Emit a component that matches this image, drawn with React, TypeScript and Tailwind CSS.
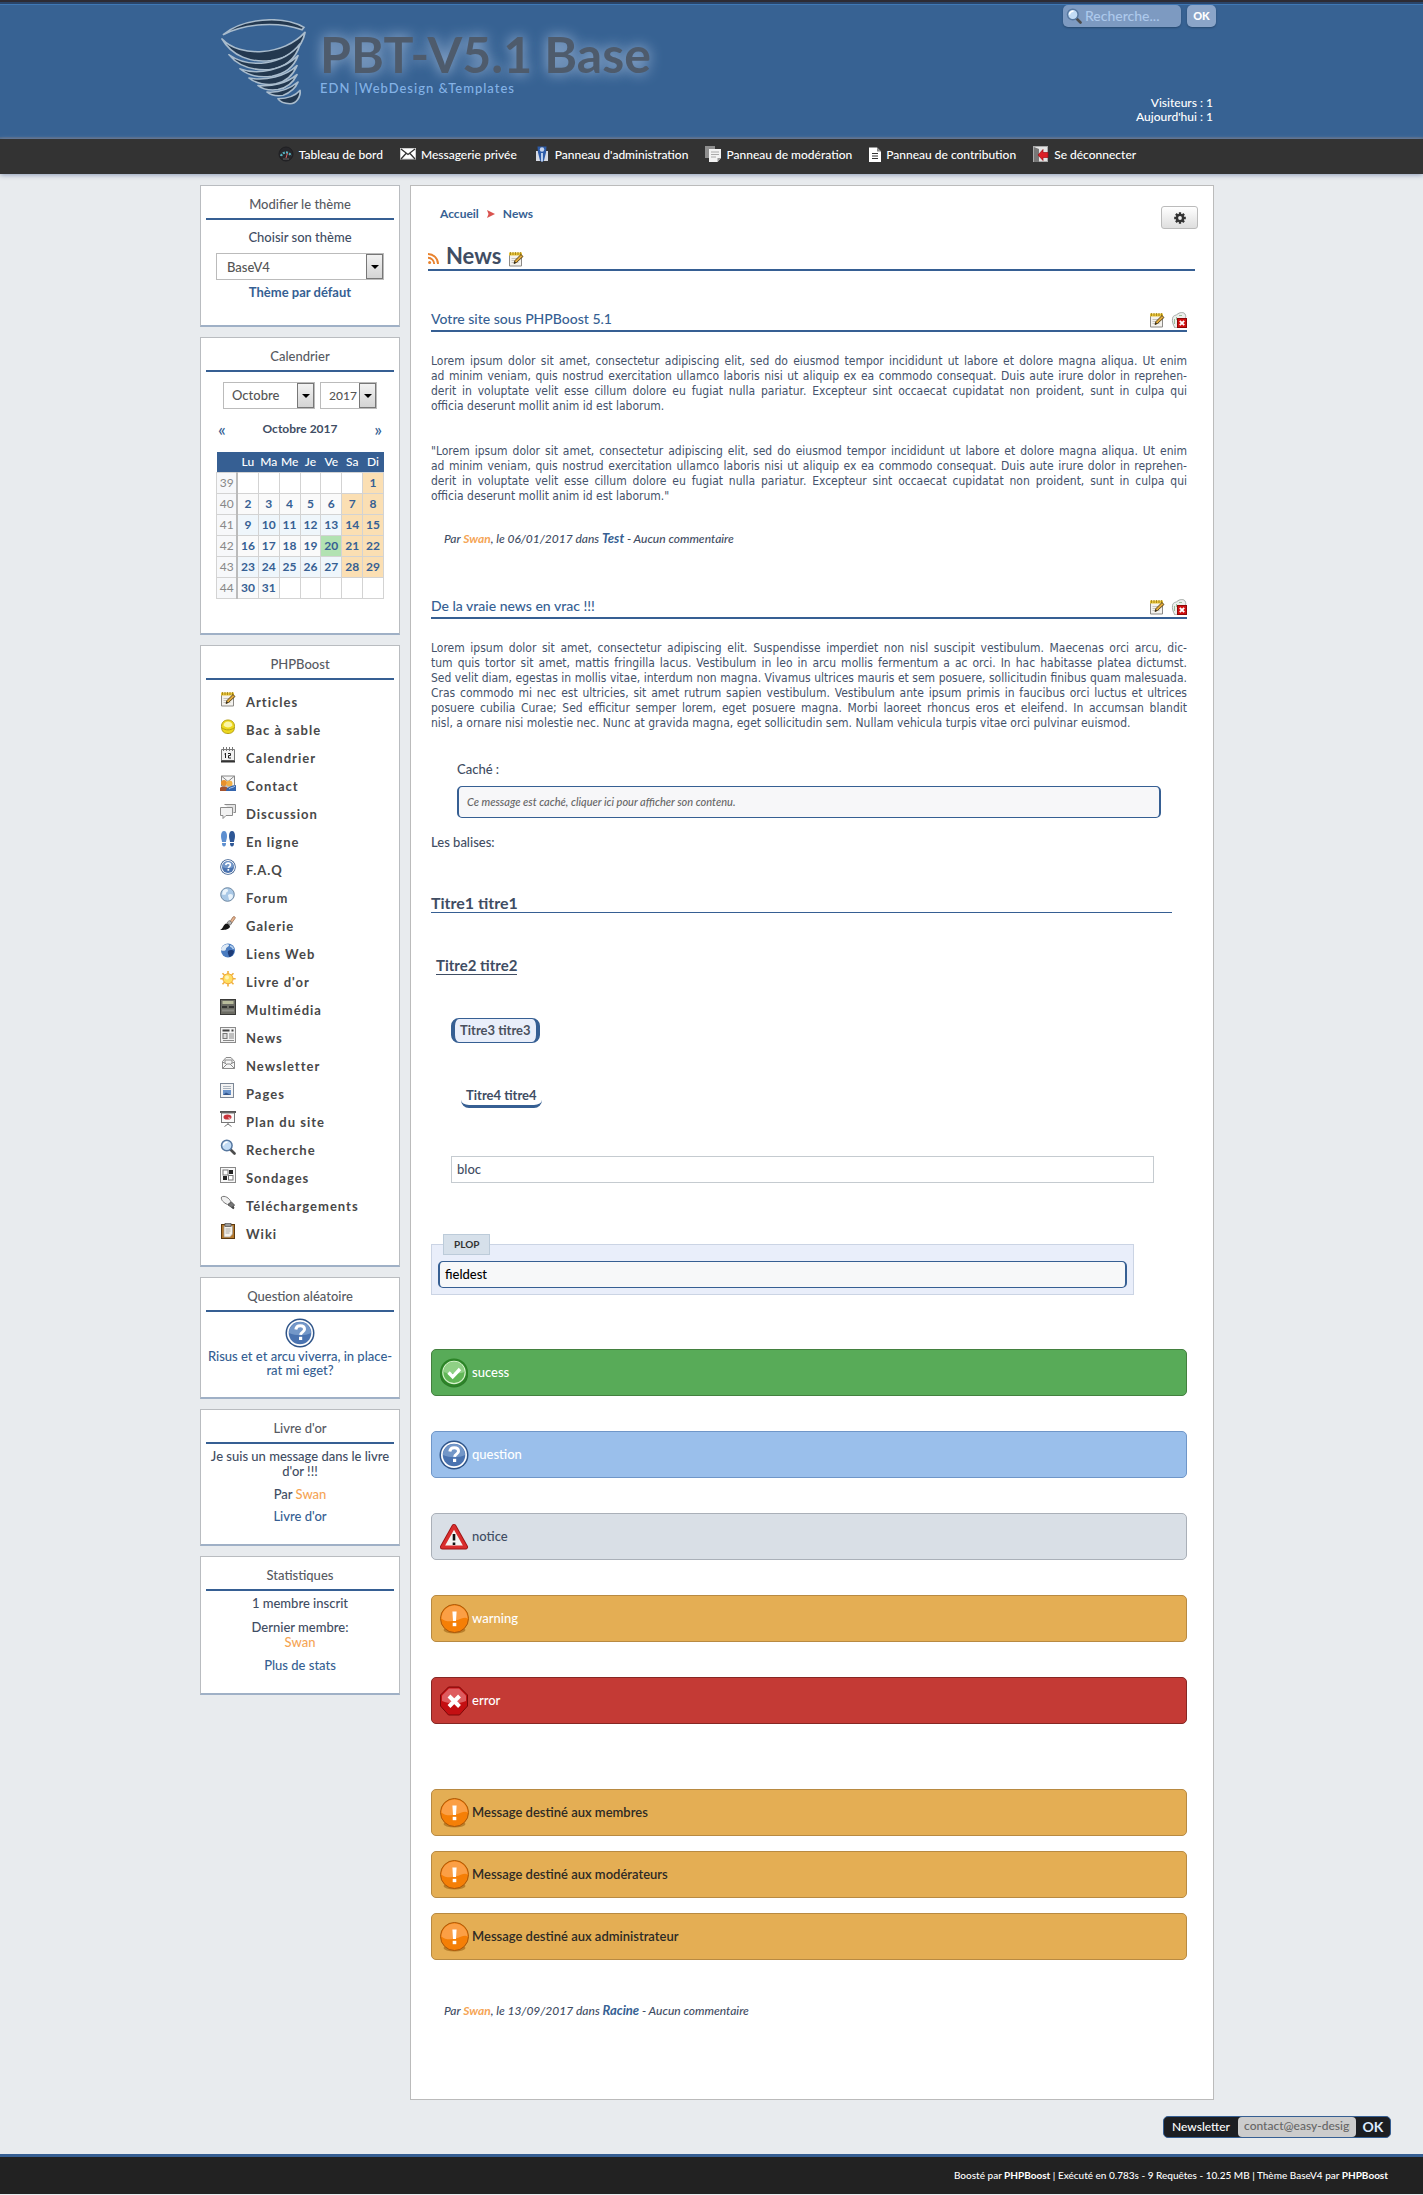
import React from 'react';

type IconProps = { className?: string };

function Svg({ children, className = 'h-4 w-4', box = 16 }: { children: React.ReactNode; className?: string; box?: number }) {
  return (
    <svg viewBox={`0 0 ${box} ${box}`} className={className} fill="none" aria-hidden="true">
      {children}
    </svg>
  );
}

function NotepadIcon({ className }: IconProps) {
  return (
    <Svg className={className}>
      <path d="M1.500 3h12v12h-12z" fill="#f4f2ee" stroke="#8c8a86" />
      <path d="M3.500 7.500h7M3.500 9.500h5M3.500 11.500h7" stroke="#c9c5bd" />
      <path d="M1 1.500h13v3H1z" fill="#e8c437" />
      <path d="M2.500 1v3M5 1v3M7.500 1v3M10 1v3M12.500 1v3" stroke="#9c7c12" strokeWidth="0.800" />
      <path d="M6 12.500l1-3L13 3.500l2 2-6.500 6z" fill="#e2a93b" stroke="#4b3a12" strokeWidth="0.900" />
      <path d="M6 12.500l.7-2 1.400 1.300z" fill="#222" />
    </Svg>
  );
}

function TrashIcon() {
  return (
    <Svg>
      <path d="M1.500 6.500C2 3 5 3.500 6 2.500c2.500-2.500 7-2.500 8-.5 1 2 1 3 0 5l-2 8-8 1C2 13 1 9 1.500 6.500z" fill="#eceeec" stroke="#9aa09c" strokeWidth="0.900" />
      <path d="M3.500 7v5M5.500 5v3M8 3.500h3" stroke="#8eb890" strokeWidth="0.900" />
      <rect x="6.500" y="6.500" width="9" height="9" fill="#d01010" stroke="#8d0606" />
      <path d="M8.800 8.800l4.400 4.400M13.200 8.800l-4.400 4.400" stroke="#fff" strokeWidth="1.900" />
    </Svg>
  );
}

function QuestionIcon({ className }: IconProps) {
  return (
    <Svg box={30} className={className}>
      <circle cx="15" cy="15" r="14.500" fill="#2f5488" />
      <circle cx="15" cy="15" r="13" fill="#fff" />
      <circle cx="15" cy="15" r="11.300" fill="#4a73b0" />
      <path d="M4 15a11 11 0 0 1 22 0c-6 3-15 3-22 0z" fill="#7397c8" />
      <path d="M10.800 11.500c.3-2.600 2-3.800 4.400-3.800 2.600 0 4.300 1.300 4.300 3.500 0 3-3.600 2.800-3.900 5.600" stroke="#fff" strokeWidth="3" />
      <rect x="14" y="18.800" width="3.200" height="3.200" fill="#fff" />
    </Svg>
  );
}

function SuccessIcon() {
  return (
    <Svg box={30} className="h-[30px] w-[30px]">
      <ellipse cx="15" cy="17" rx="14" ry="12.500" fill="#2d7a2a" />
      <circle cx="15" cy="14.500" r="14" fill="#2c8427" />
      <circle cx="15" cy="14.500" r="11.800" fill="#d5f2cb" />
      <circle cx="15" cy="14.500" r="10.600" fill="#62b757" />
      <path d="M4.500 14a10.500 10.500 0 0 1 21 0c-6 2-15 2-21 0z" fill="#8fd085" />
      <path d="M9.500 14.500l4.200 4.300 7.300-7.800" stroke="#fff" strokeWidth="3.400" />
    </Svg>
  );
}

function NoticeIcon() {
  return (
    <Svg box={30} className="h-[30px] w-[30px]">
      <path d="M15 4.500L26.500 25h-23z" fill="#f4f4f2" stroke="#9e1414" strokeWidth="5" strokeLinejoin="round" />
      <path d="M15 4.500L26.500 25h-23z" fill="#f4f4f2" stroke="#d92e2e" strokeWidth="3.200" strokeLinejoin="round" />
      <path d="M15 12v6.500M15 20.500v2.500" stroke="#111" strokeWidth="2.600" />
    </Svg>
  );
}

function WarningIcon() {
  return (
    <Svg box={30} className="h-[30px] w-[30px]">
      <ellipse cx="15.500" cy="26" rx="11" ry="3.500" fill="#b87f2c" />
      <circle cx="15.500" cy="14.500" r="14" fill="#f57f06" stroke="#a8560a" />
      <path d="M2.500 14.500a13 13 0 0 1 26 0c-3-2-7 1-12 2-5 1.500-11 1-14-2z" fill="#fb9f45" />
      <path d="M13.400 7.500h4.200l-.6 9.500h-3z" fill="#fff" />
      <rect x="13.700" y="18.800" width="3.600" height="3.400" fill="#fff" />
    </Svg>
  );
}

function ErrorIcon() {
  return (
    <Svg box={30} className="h-[30px] w-[30px]">
      <path d="M9.500 1h11l8 8v11l-8 9h-11l-8-9V9z" fill="#c40f12" stroke="#7c0808" />
      <path d="M10 2.500h10l7 7V15c-7 3-17 3-24 0V9.500z" fill="#de5c5f" />
      <path d="M10 10l10.500 10.500M20.500 10L10 20.500" stroke="#fff" strokeWidth="4" />
    </Svg>
  );
}

function MagnifierIcon({ className }: IconProps) {
  return (
    <Svg className={className}>
      <path d="M10.500 10.500l4 4" stroke="#4c4c4c" strokeWidth="2.600" strokeLinecap="round" />
      <circle cx="6.800" cy="6.500" r="5.300" fill="#c3dcf5" stroke="#56779f" strokeWidth="1.500" />
      <path d="M3.500 6.500a3.500 3.500 0 0 1 4-3.300" stroke="#fff" strokeWidth="1.500" />
    </Svg>
  );
}

const menu: { label: string; icon: React.ReactNode }[] = [
  { label: 'Articles', icon: <NotepadIcon /> },
  {
    label: 'Bac à sable',
    icon: (
      <Svg>
        <path d="M1.500 7.500C1.500 3.500 4 1 8 1s6.500 2.500 6.500 6.500c0 5-2.500 7-6.500 7s-6.500-2-6.500-7z" fill="#edd81f" stroke="#b5a016" />
        <path d="M3.500 6.500C4 3.500 6 2.500 8 2.500s4 1 4.500 4C10 9 6 9 3.500 6.500z" fill="#fbf6a8" />
        <path d="M2 9c4 2.500 8 2.500 12 0" stroke="#b5a016" />
      </Svg>
    ),
  },
  {
    label: 'Calendrier',
    icon: (
      <Svg>
        <path d="M1.500 2.500h13v11h-13z" fill="#f2f2f2" stroke="#777" />
        <path d="M1 14.500h14" stroke="#333" strokeWidth="2" />
        <path d="M3.500 0v4M6.500 0v4M9.500 0v4M12.500 0v4" stroke="#777" />
        <path d="M5.500 6v5M4.500 7h1M8 6.500h2.500v2H8.500V11H11" stroke="#222" />
      </Svg>
    ),
  },
  {
    label: 'Contact',
    icon: (
      <Svg>
        <path d="M1.500 1h13v10h-13z" fill="#f6f6f6" stroke="#888" />
        <path d="M1.500 1L8 6.500 14.500 1" stroke="#888" />
        <circle cx="4" cy="8" r="3" fill="#e8902c" />
        <circle cx="9.500" cy="8.500" r="3" fill="#f2b046" />
        <path d="M0 16v-3c1-2 6-2 8 0v3z" fill="#a5532f" />
        <path d="M6 16c0-4 5-5 10-6v6z" fill="#3565ad" />
        <path d="M9 14c2-2 4-1 6-3" stroke="#a9c6ec" />
      </Svg>
    ),
  },
  {
    label: 'Discussion',
    icon: (
      <Svg>
        <path d="M4.500 1.500h11v8h-2" fill="#e4e4e4" stroke="#8b8b8b" />
        <path d="M.5 4.500h12v8H6L3 15.500v-3H.5z" fill="#f2f2f2" stroke="#8b8b8b" />
      </Svg>
    ),
  },
  {
    label: 'En ligne',
    icon: (
      <Svg>
        <path d="M1 5c0-3 1-5 3-5s3 2 3 5-1 4-1 6H2c0-2-1-3-1-6z" fill="#5d8fd0" />
        <path d="M2 12h4c0 2-.5 3.500-2 3.500S2 14 2 12z" fill="#5d8fd0" />
        <path d="M15 5c0-3-1-5-3-5S9 2 9 5s1 4 1 6h4c0-2 1-3 1-6z" fill="#2e5796" />
        <path d="M14 12h-4c0 2 .5 3.500 2 3.500s2-1.500 2-3.500z" fill="#2e5796" />
      </Svg>
    ),
  },
  { label: 'F.A.Q', icon: <QuestionIcon className="h-4 w-4" /> },
  {
    label: 'Forum',
    icon: (
      <Svg>
        <circle cx="7.500" cy="7.500" r="6.800" fill="#a9c8e6" stroke="#6f89a3" />
        <path d="M3 3.500c2-2 5-2 5 0s-2 1-2 3-2 1-4 1zM8 8c2-2 5-1 5 1s-2 4-4 4c0-2-1-3-1-5z" fill="#e9f3fb" />
      </Svg>
    ),
  },
  {
    label: 'Galerie',
    icon: (
      <Svg>
        <path d="M9 8l4-6c1-1 3 0 2 1.500L11 9z" fill="#e8b490" stroke="#8a6040" strokeWidth="0.700" />
        <path d="M7 8l2-2.500 3 2-1.500 2.500z" fill="#b9b9b9" stroke="#666" strokeWidth="0.700" />
        <path d="M0 15c3-1 3-5 6-6.500 2 0 4 1.500 4 3.500-2 3-6 3-10 3z" fill="#161616" />
      </Svg>
    ),
  },
  {
    label: 'Liens Web',
    icon: (
      <Svg>
        <circle cx="8" cy="7.500" r="7" fill="#4a7cc0" />
        <path d="M3 3c2-2 6-2 6-1 0 2-3 2-3 4S3 8 1.500 7.500 2 4 3 3z" fill="#dfeaf5" />
        <path d="M8 8c2-1.500 5-1 6 0 0 3-3 6-5 6 0-2-2-4-1-6z" fill="#1d3c78" />
        <path d="M10 3c2 0 3 2 3.500 3" stroke="#b7d0ec" strokeWidth="1.500" />
      </Svg>
    ),
  },
  {
    label: "Livre d'or",
    icon: (
      <Svg>
        <path d="M8 0v15.500M.3 7.800h15.400M2.500 2.300l11 11M13.500 2.300l-11 11" stroke="#efb03c" strokeWidth="1.600" />
        <circle cx="8" cy="7.800" r="5" fill="#ffdf62" stroke="#f2a73a" />
        <circle cx="7" cy="6.500" r="2" fill="#fff5b8" />
      </Svg>
    ),
  },
  {
    label: 'Multimédia',
    icon: (
      <Svg>
        <rect x="0.500" y="0.500" width="15" height="15" fill="#6c6c64" stroke="#3a3a38" />
        <path d="M2.500 3.500h11" stroke="#b9bc9c" strokeWidth="3" />
        <path d="M2 8h5M9 8h5" stroke="#222" strokeWidth="1.500" />
        <path d="M2 11.500h12" stroke="#8d8d86" strokeWidth="2" />
      </Svg>
    ),
  },
  {
    label: 'News',
    icon: (
      <Svg>
        <rect x="0.500" y="0.500" width="15" height="15" fill="#f3f3f3" stroke="#8a8a8a" />
        <path d="M2.500 3.500h7M11.500 3.500h2" stroke="#444" strokeWidth="2" />
        <rect x="3" y="6.500" width="4" height="5" fill="#ddd" stroke="#777" />
        <path d="M9 7h5M9 9h5M9 11h5M3 13.500h11" stroke="#8a8a8a" />
      </Svg>
    ),
  },
  {
    label: 'Newsletter',
    icon: (
      <Svg>
        <path d="M2.500 13.500v-7L6 2.500h5l3.500 4v7z" fill="#f6f6f6" stroke="#8a8a8a" />
        <path d="M5 8V5h7v3M2.500 13.500L7 9h3l4.500 4.500M2.500 7l4 2M14.500 7l-4 2" stroke="#8a8a8a" />
      </Svg>
    ),
  },
  {
    label: 'Pages',
    icon: (
      <Svg>
        <rect x="0.500" y="0.500" width="13" height="14" fill="#f3f3f3" stroke="#7c8796" />
        <path d="M3 3.500h8M3 5.500h8" stroke="#aab3be" />
        <rect x="3" y="7" width="8" height="5" fill="#6a94cc" />
        <path d="M3 12l3-2.500 5 2.500z" fill="#35588f" />
      </Svg>
    ),
  },
  {
    label: 'Plan du site',
    icon: (
      <Svg>
        <path d="M0 1h16" stroke="#555" strokeWidth="2" />
        <rect x="1.500" y="2" width="13" height="9.500" fill="#fafafa" stroke="#777" />
        <ellipse cx="7.500" cy="6" rx="4" ry="2.600" fill="#c8353c" />
        <path d="M8 6l3 1-2 1.500z" fill="#efb0b0" />
        <path d="M8 12v1.500M8 13l-3.500 2.500M8 13l3.500 2.500" stroke="#777" />
      </Svg>
    ),
  },
  { label: 'Recherche', icon: <MagnifierIcon /> },
  {
    label: 'Sondages',
    icon: (
      <Svg>
        <rect x="0.500" y="0.500" width="15" height="15" fill="#f8f8f8" stroke="#888" />
        <rect x="3" y="3" width="5" height="5" fill="#fff" stroke="#777" />
        <rect x="9" y="3" width="4" height="4" fill="#222" />
        <rect x="3" y="9" width="4" height="4" fill="#222" />
        <rect x="8.500" y="8.500" width="4.500" height="4.500" fill="#fff" stroke="#777" />
      </Svg>
    ),
  },
  {
    label: 'Téléchargements',
    icon: (
      <Svg>
        <path d="M1.500 2c3-2 8 1 9.500 5L7.500 9.500C4 8 .5 5 1.500 2z" fill="#f0f0f0" stroke="#777" />
        <path d="M8 10l3.500-3 3 3-2 3z" fill="#777" stroke="#444" strokeWidth="0.800" />
        <path d="M12 12l2 1.500" stroke="#444" strokeWidth="2" />
      </Svg>
    ),
  },
  {
    label: 'Wiki',
    icon: (
      <Svg>
        <rect x="1.500" y="1.500" width="13" height="14" fill="#b77a2c" stroke="#5c3a10" />
        <path d="M4 3h8.500v8l-2.500 3H4z" fill="#f7f3ea" stroke="#999" strokeWidth="0.700" />
        <path d="M5.500 6h5M5.500 8h5M5.500 10h4" stroke="#aaa" />
        <rect x="5" y="0.500" width="6" height="3" fill="#9a9a9a" stroke="#555" strokeWidth="0.700" />
      </Svg>
    ),
  },
];

const navItems: { label: string; icon: React.ReactNode }[] = [
  {
    label: 'Tableau de bord',
    icon: (
      <Svg>
        <circle cx="8" cy="8" r="7" fill="#27272b" stroke="#1f1f22" />
        <path d="M3 10a5.300 5.300 0 0 1 10 0" stroke="#58b3c2" strokeWidth="2.200" strokeDasharray="2 1.200" />
        <path d="M8 12l1.500-5" stroke="#d66" />
        <path d="M5 13h6" stroke="#666" />
      </Svg>
    ),
  },
  {
    label: 'Messagerie privée',
    icon: (
      <Svg>
        <rect x="0.500" y="2.500" width="15" height="10.500" fill="#fff" stroke="#ccc" />
        <path d="M1 3l7 5.500L15 3M1 13l5-5.500M15 13l-5-5.500" stroke="#333" strokeWidth="1.300" />
      </Svg>
    ),
  },
  {
    label: "Panneau d'administration",
    icon: (
      <Svg>
        <path d="M2 5h5v10H2zM9 5h5v10H9z" fill="#d7dbe4" />
        <path d="M3.500 0.500h9l-.5 6-2 8-2 1.500-2-1.500-2-8z" fill="#2c5ba8" />
        <circle cx="8" cy="3.500" r="2.200" fill="#c5d3ec" />
        <path d="M8 7v8.500" stroke="#c9daf2" strokeWidth="1.800" />
      </Svg>
    ),
  },
  {
    label: 'Panneau de modération',
    icon: (
      <Svg>
        <rect x="0" y="0" width="10" height="12" fill="#8f8f8f" />
        <path d="M4 3h12v9l-3.500 4H4z" fill="#f3f3f3" />
        <path d="M6 6h8M6 8.500h8M6 11h5" stroke="#aaa" />
        <path d="M12.500 16v-4H16z" fill="#999" />
      </Svg>
    ),
  },
  {
    label: 'Panneau de contribution',
    icon: (
      <svg viewBox="0 0 12 16" className="h-4 w-3" fill="none" aria-hidden="true">
        <path d="M0 1.500h8l4 4V16H0z" fill="#fff" />
        <path d="M8 1.500v4h4z" fill="#888" />
        <path d="M3 7.500h6M3 10h6M3 12.500h6" stroke="#333" />
      </svg>
    ),
  },
  {
    label: 'Se déconnecter',
    icon: (
      <Svg>
        <rect x="0.500" y="0.500" width="14" height="15" fill="#e4e4e4" stroke="#aaa" />
        <path d="M1 1l5 2v13H1z" fill="#777" />
        <path d="M5 9l5-5.500v3h5v5h-5v3z" fill="#dc1f26" stroke="#9b0d12" strokeWidth="0.700" />
      </Svg>
    ),
  },
];

function TornadoLogo() {
  const bands = [
    'M2 24c18 23 62 20 83-8-3 20-17 31-34 34-20 3-39-5-49-26z',
    'M9 43c20 17 54 13 71-13-4 19-16 29-31 31-17 1-31-4-40-18z',
    'M20 60c18 8 44 1 58-16-4 14-13 22-26 25-12 2-24-1-32-9z',
    'M29 71c16 4 37-2 48-15-4 12-10 19-21 22-9 2-20 0-27-7z',
    'M38 80c14 2 29-3 39-13-4 10-10 16-19 18-7 1-15 0-20-5z',
    'M47 88c12 1 22-3 31-12-3 9-8 13-15 16-6 1-12 0-16-4z',
    'M58 96c9 0 17-3 22-10 1 8-4 16-10 16-5 0-10-2-12-6z',
  ];
  return (
    <svg viewBox="0 0 88 106" className="h-[88px] w-[88px]" preserveAspectRatio="none" aria-hidden="true">
      <path d="M3 19C22-1 62-5 84 10l-2 3C58 3 26 5 3 19z" fill="#23384f" stroke="#a9bccd" strokeWidth="1.800" />
      {bands.map((d) => (
        <path key={d} d={d} fill="#23384f" stroke="#a9bccd" strokeWidth="1.800" strokeLinejoin="round" />
      ))}
    </svg>
  );
}

function Card({ title, children, className }: { title: string; children: React.ReactNode; className: string }) {
  return (
    <section className="border border-b-2 border-[#b9bcc0] border-b-[#9fb0c6] bg-white px-[5px] pt-2">
      <h2 className="border-b-2 border-[#365f93] pt-0.5 pb-[6px] text-center text-[13px] leading-4 font-medium text-[#575a62]">{title}</h2>
      <div className={className}>{children}</div>
    </section>
  );
}

function Select({ label, value, className, textClass }: { label: string; value: string; className: string; textClass: string }) {
  return (
    <span className={`relative inline-block h-[27px] ${className}`}>
      <select aria-label={label} defaultValue={value} className={`h-full w-full appearance-none border border-[#bbb] bg-white text-[#555] ${textClass}`}>
        <option>{value}</option>
      </select>
      <span className="pointer-events-none absolute top-px right-px bottom-px flex w-[17px] items-center justify-center border border-[#777] bg-linear-to-b from-[#f2f2f2] to-[#d4d4d4]">
        <svg viewBox="0 0 8 4" className="h-1 w-2" aria-hidden="true">
          <path d="M0 0h8L4 4z" fill="#000" />
        </svg>
      </span>
    </span>
  );
}

const weeks: [number, (number | null)[]][] = [
  [39, [null, null, null, null, null, null, 1]],
  [40, [2, 3, 4, 5, 6, 7, 8]],
  [41, [9, 10, 11, 12, 13, 14, 15]],
  [42, [16, 17, 18, 19, 20, 21, 22]],
  [43, [23, 24, 25, 26, 27, 28, 29]],
  [44, [30, 31, null, null, null, null, null]],
];

function dayClass(day: number | null, col: number, row: number) {
  if (day === null) return 'bg-white';
  if (day === 20) return 'bg-[#b2e2b2]';
  if (col > 4) return 'bg-[#fbdfb3]';
  return row % 2 === 0 ? 'bg-[#eff6fb]' : 'bg-[#fafafa]';
}

function Calendar() {
  return (
    <table className="mx-auto w-[168px] table-fixed border-collapse text-center text-xs leading-4">
      <thead>
        <tr className="h-5 bg-[#365f93] text-white">
          <th className="font-normal" aria-label="Semaine"></th>
          {['Lu', 'Ma', 'Me', 'Je', 'Ve', 'Sa', 'Di'].map((d) => (
            <th key={d} className="p-0 font-medium">{d}</th>
          ))}
        </tr>
      </thead>
      <tbody>
        {weeks.map(([week, days], row) => (
          <tr key={week} className="h-[21px]">
            <th className="border border-r-2 border-[#d3d3d3] border-r-[#bbb] bg-[#f7f8fa] p-0 font-normal text-[#888]">{week}</th>
            {days.map((day, col) => (
              <td key={col} className={`border border-[#d3d3d3] p-0 font-bold text-[#365f93] ${dayClass(day, col, row)}`}>{day}</td>
            ))}
          </tr>
        ))}
      </tbody>
    </table>
  );
}

function Lines({ lines, last }: { lines: string[]; last: string }) {
  return (
    <p className="font-['DejaVu_Sans_Condensed',sans-serif] text-xs leading-[15px] font-normal text-[#44526a]">
      {lines.map((line) => (
        <span key={line} className="block text-justify whitespace-nowrap [text-align-last:justify]">{line}</span>
      ))}
      <span className="block whitespace-nowrap">{last}</span>
    </p>
  );
}

function ArticleHead({ title }: { title: string }) {
  return (
    <header className="flex h-[26px] items-end justify-between border-b-2 border-[#365f93] pb-0.5">
      <h2 className="text-sm leading-[18px]">
        <a href="#article" className="text-[#365f93]">{title}</a>
      </h2>
      <div className="flex gap-[6px]">
        <a href="#edit" aria-label="Modifier"><NotepadIcon /></a>
        <a href="#delete" aria-label="Supprimer"><TrashIcon /></a>
      </div>
    </header>
  );
}

function Byline({ date, category }: { date: string; category: string }) {
  return (
    <p className="ml-[13px] text-xs leading-[15px] text-[#3f4d63] italic">
      Par <a href="#swan" className="font-bold text-[#f5a556]">Swan</a>, le {date} dans{' '}
      <a href="#cat" className="text-[13px] font-bold text-[#365f93]">{category}</a> - Aucun commentaire
    </p>
  );
}

function Alert({ icon, className, children }: { icon: React.ReactNode; className: string; children: React.ReactNode }) {
  return (
    <div className={`flex h-[47px] items-center gap-[3px] rounded-[5px] border pl-[7px] text-[13px] ${className}`}>
      {icon}
      <span className="pb-0.5 leading-4">{children}</span>
    </div>
  );
}

const warningBox = 'border-[#b88a42] bg-[#e4ae54]';

export default function App() {
  return (
    <div className="flex min-h-screen flex-col bg-[#e8ebee] font-['Lato',sans-serif] font-medium text-[#3f4d63]">
      <header className="border-t-2 border-[#2d2b33] bg-[#376293]">
        <div className="h-[3px] border-b border-[#3f78b5] bg-[#2a4468]" />
        <div className="mx-auto flex h-[132px] max-w-[1023px] justify-between pr-[7px] pl-5">
          <div className="flex">
            <div className="pt-[14px]"><TornadoLogo /></div>
            <div className="pt-[21px] pl-3">
              <h1 className="text-[50px] leading-[56px] font-bold text-[#4e5b6c] [text-shadow:0_0_14px_#a9c0de]">PBT-V5.1 Base</h1>
              <p className="text-[13px] leading-3 tracking-[1px] text-[#84b2e6]">EDN |WebDesign &amp;Templates</p>
            </div>
          </div>
          <div className="flex flex-col items-end justify-between pb-[13px]">
            <form className="flex gap-[6px]" onSubmit={(e) => e.preventDefault()}>
              <label className="flex h-[22px] w-[118px] items-center rounded-[5px] bg-[#7d9ac1] pl-[3px] shadow-[0_1px_2px_#26486f]">
                <MagnifierIcon className="h-4 w-4 shrink-0" />
                <input type="text" aria-label="Recherche" placeholder="Recherche..." className="w-full min-w-0 bg-transparent pl-[3px] text-sm outline-none placeholder:text-[#adc9ec]" />
              </label>
              <button className="h-[22px] w-[29px] rounded-[5px] bg-[#8ba5c8] text-[11px] font-black text-white shadow-[0_1px_2px_#26486f]">OK</button>
            </form>
            <p className="pr-[3px] text-right text-xs leading-[14px] text-white">
              Visiteurs : 1<br />Aujourd'hui : 1
            </p>
          </div>
        </div>
        <div className="h-0.5 bg-[#4d6685]" />
      </header>

      <nav className="flex h-[35px] justify-center bg-[#333] pr-[9px] text-xs text-white shadow-[0_1px_5px_#8f9db8]">
        <ul className="flex gap-[17px] pt-[7px]">
          {navItems.map((item) => (
            <li key={item.label}>
              <a href="#nav" className="flex gap-[5px]">
                {item.icon}
                <span className="leading-[18px]">{item.label}</span>
              </a>
            </li>
          ))}
        </ul>
      </nav>

      <div className="mx-auto flex w-full max-w-[1023px] items-start gap-[10px] pt-[11px] pr-[9px]">
        <aside className="flex w-[200px] shrink-0 flex-col gap-[10px] text-[13px]">
          <Card title="Modifier le thème" className="flex flex-col items-center pt-[9px] pb-[25px] leading-4">
            <span>Choisir son thème</span>
            <Select label="Choisir son thème" value="BaseV4" className="mt-2 w-[168px]" textClass="pl-[10px] text-[13px]" />
            <a href="#default" className="mt-1 font-bold text-[#365f93]">Thème par défaut</a>
          </Card>

          <Card title="Calendrier" className="pt-[10px] pb-[34px]">
            <div className="flex justify-center gap-[5px]">
              <Select label="Mois" value="Octobre" className="w-[92px]" textClass="pl-2 text-[13px]" />
              <Select label="Année" value="2017" className="w-[57px]" textClass="pl-2 text-xs" />
            </div>
            <div className="mt-3 mb-[15px] flex items-center justify-between px-3 text-xs leading-4">
              <a href="#prev" aria-label="Mois précédent" className="text-lg leading-4 text-[#365f93]">«</a>
              <span className="font-bold">Octobre 2017</span>
              <a href="#next" aria-label="Mois suivant" className="text-lg leading-4 text-[#365f93]">»</a>
            </div>
            <Calendar />
          </Card>

          <Card title="PHPBoost" className="pt-[11px] pb-[14px]">
            <ul className="pl-[14px]">
              {menu.map((item) => (
                <li key={item.label} className="h-7">
                  <a href="#menu" className="flex gap-[10px]">
                    {item.icon}
                    <span className="pt-[3px] text-[13px] leading-4 font-bold tracking-[1px] text-[#484848]">{item.label}</span>
                  </a>
                </li>
              ))}
            </ul>
          </Card>

          <Card title="Question aléatoire" className="flex flex-col items-center pt-[6px] pb-5 text-center text-[#365f93]">
            <QuestionIcon className="h-[30px] w-[30px]" />
            <a href="#faq" className="mt-px leading-[14px] whitespace-nowrap">Risus et et arcu viverra, in place-<br />rat mi eget?</a>
          </Card>

          <Card title="Livre d'or" className="flex flex-col items-center pt-[5px] pb-5 text-center leading-[15px]">
            <p>Je suis un message dans le livre<br />d'or !!!</p>
            <p className="mt-2">Par <a href="#swan" className="text-[#f5a556]">Swan</a></p>
            <a href="#book" className="mt-[7px] text-[#365f93]">Livre d'or</a>
          </Card>

          <Card title="Statistiques" className="flex flex-col items-center pt-[5px] pb-5 text-center leading-[15px]">
            <p>1 membre inscrit</p>
            <p className="mt-[9px]">Dernier membre:<br /><a href="#swan" className="text-[#f5a556]">Swan</a></p>
            <a href="#stats" className="mt-2 text-[#365f93]">Plus de stats</a>
          </Card>
        </aside>

        <main className="min-w-0 flex-1 border border-[#bbb] bg-white pt-5 pr-[18px] pb-[81px] pl-[17px]">
          <div className="flex items-start justify-between pr-0 pl-3">
            <nav className="flex items-center gap-2 text-xs leading-4 font-bold text-[#365f93]">
              <a href="#home">Accueil</a>
              <svg viewBox="0 0 8 8" className="h-2 w-2" aria-hidden="true">
                <path d="M0 0l8 4-8 4 1.500-4z" fill="#d9534f" />
              </svg>
              <a href="#news">News</a>
            </nav>
            <button aria-label="Réglages" className="-mr-[3px] flex h-[23px] w-[37px] items-center justify-center rounded-[3px] border border-[#bbb] bg-linear-to-b from-white to-[#dedede]">
              <svg viewBox="0 0 12 12" className="h-3 w-3" aria-hidden="true">
                <path d="M6 .2v11.600M.2 6h11.600M1.900 1.900l8.200 8.200M10.100 1.900l-8.200 8.200" stroke="#333" strokeWidth="2.300" />
                <circle cx="6" cy="6" r="3.200" fill="none" stroke="#333" strokeWidth="2.200" />
                <circle cx="6" cy="6" r="1.900" fill="#eee" />
              </svg>
            </button>
          </div>

          <header className="mt-[14px] flex h-[28px] items-center border-b-2 border-[#365f93]">
            <svg viewBox="0 0 11 11" className="mt-1 h-[11px] w-[11px]" fill="none" aria-hidden="true">
              <circle cx="1.600" cy="9.400" r="1.500" fill="#e8822e" />
              <path d="M0 4.800a6.200 6.200 0 0 1 6.200 6.200M0 1a10 10 0 0 1 10 10" stroke="#e8822e" strokeWidth="1.900" />
            </svg>
            <h1 className="ml-[7px] text-[22px] leading-6 font-bold text-[#3f4d63]">News</h1>
            <a href="#edit" aria-label="Modifier" className="mt-[6px] ml-[7px]"><NotepadIcon /></a>
          </header>

          <div className="pr-2 pl-[3px]">
            <article className="pt-[35px]">
              <ArticleHead title="Votre site sous PHPBoost 5.1" />
              <div className="mt-[22px] flex flex-col gap-[30px]">
                <Lines
                  lines={[
                    'Lorem ipsum dolor sit amet, consectetur adipiscing elit, sed do eiusmod tempor incididunt ut labore et dolore magna aliqua. Ut enim',
                    'ad minim veniam, quis nostrud exercitation ullamco laboris nisi ut aliquip ex ea commodo consequat. Duis aute irure dolor in reprehen-',
                    'derit in voluptate velit esse cillum dolore eu fugiat nulla pariatur. Excepteur sint occaecat cupidatat non proident, sunt in culpa qui',
                  ]}
                  last="officia deserunt mollit anim id est laborum."
                />
                <Lines
                  lines={[
                    '"Lorem ipsum dolor sit amet, consectetur adipiscing elit, sed do eiusmod tempor incididunt ut labore et dolore magna aliqua. Ut enim',
                    'ad minim veniam, quis nostrud exercitation ullamco laboris nisi ut aliquip ex ea commodo consequat. Duis aute irure dolor in reprehen-',
                    'derit in voluptate velit esse cillum dolore eu fugiat nulla pariatur. Excepteur sint occaecat cupidatat non proident, sunt in culpa qui',
                  ]}
                  last={'officia deserunt mollit anim id est laborum."'}
                />
              </div>
              <div className="mt-[27px]"><Byline date="06/01/2017" category="Test" /></div>
            </article>

            <article className="pt-[47px]">
              <ArticleHead title="De la vraie news en vrac !!!" />
              <div className="mt-[22px]">
                <Lines
                  lines={[
                    'Lorem ipsum dolor sit amet, consectetur adipiscing elit. Suspendisse imperdiet non nisl suscipit vestibulum. Maecenas orci arcu, dic-',
                    'tum quis tortor sit amet, mattis fringilla lacus. Vestibulum in leo in arcu mollis fermentum a ac orci. In hac habitasse platea dictumst.',
                    'Sed velit diam, egestas in mollis vitae, interdum non magna. Vivamus ultrices mauris et sem posuere, sollicitudin finibus quam malesuada.',
                    'Cras commodo mi nec est ultricies, sit amet rutrum sapien vestibulum. Vestibulum ante ipsum primis in faucibus orci luctus et ultrices',
                    'posuere cubilia Curae; Sed efficitur semper lorem, eget posuere magna. Morbi laoreet rhoncus eros et eleifend. In accumsan blandit',
                  ]}
                  last="nisl, a ornare nisi molestie nec. Nunc at gravida magna, eget sollicitudin sem. Nullam vehicula turpis vitae orci pulvinar euismod."
                />
              </div>

              <div className="mt-[30px] mr-[26px] ml-[26px] text-[13px]">
                <p className="leading-4">Caché :</p>
                <button className="mt-[9px] flex h-8 w-full items-center rounded-[5px] border border-x-2 border-[#365f93] bg-[#f7f7f9] px-2 text-[11px] text-[#666] italic">
                  Ce message est caché, cliquer ici pour afficher son contenu.
                </button>
              </div>
              <p className="mt-4 text-[13px] leading-4">Les balises:</p>

              <h3 className="mt-[44px] mr-[15px] border-b border-[#365f93] text-base leading-[18px] font-bold">Titre1 titre1</h3>
              <h4 className="mt-[43px] ml-[5px] text-[15px] leading-[18px] font-bold">
                <span className="border-b border-[#3f4d63]">Titre2 titre2</span>
              </h4>
              <h5 className="mt-[44px] ml-5 flex">
                <span className="rounded-lg border border-x-4 border-[#365f93] bg-[#e9eefa] px-[5px] text-[13px] leading-[23px] font-bold text-[#4b515d]">Titre3 titre3</span>
              </h5>
              <h6 className="mt-[43px] ml-[30px] flex">
                <span className="rounded-lg border-b-[3px] border-[#365f93] px-[5px] pb-px text-[13px] leading-[18px] font-bold">Titre4 titre4</span>
              </h6>

              <div className="mt-[48px] mr-[33px] ml-5 border border-[#c5cbd0] px-[5px] text-[13px] leading-[25px]">bloc</div>

              <fieldset className="mt-[51px] mr-[53px] border border-[#cbd4e4] bg-[#e9eefa] px-[6px] pb-[6px]">
                <legend className="ml-[5px] border border-[#bccbd9] bg-[#d6e0ea] px-[10px] text-[10px] leading-[19px] font-bold text-[#333]">PLOP</legend>
                <div className="mt-[6px] rounded-[5px] border border-x-2 border-[#365f93] bg-[#f7f8f9] px-[5px] text-[13px] leading-[25px] text-black">fieldest</div>
              </fieldset>

              <div className="mt-[54px] flex flex-col gap-[35px]">
                <Alert icon={<SuccessIcon />} className="border-[#43803f] bg-[#58ab58] text-white">sucess</Alert>
                <Alert icon={<QuestionIcon className="h-[30px] w-[30px]" />} className="border-[#6f96c8] bg-[#9abfeb] text-white">question</Alert>
                <Alert icon={<NoticeIcon />} className="border-[#aab0b8] bg-[#d9dfe6]">notice</Alert>
                <Alert icon={<WarningIcon />} className={`text-white ${warningBox}`}>warning</Alert>
                <Alert icon={<ErrorIcon />} className="border-[#862724] bg-[#c43a35] text-white">error</Alert>
              </div>
              <div className="mt-[65px] flex flex-col gap-[15px]">
                {['membres', 'modérateurs', 'administrateur'].map((who) => (
                  <Alert key={who} icon={<WarningIcon />} className={`font-semibold text-[#2d2a24] ${warningBox}`}>
                    Message destiné aux {who}
                  </Alert>
                ))}
              </div>
              <div className="mt-[43px]"><Byline date="13/09/2017" category="Racine" /></div>
            </article>
          </div>
        </main>
      </div>

      <form className="mt-4 mr-8 mb-4 flex h-[22px] self-end overflow-hidden rounded-[5px] border border-[#365f93] bg-[#1c1e22] text-white" onSubmit={(e) => e.preventDefault()}>
        <label htmlFor="newsletter" className="w-[74px] text-center text-xs leading-[19px]">Newsletter</label>
        <input id="newsletter" type="email" defaultValue="contact@easy-design.fr" className="w-[118px] rounded bg-[#ccc] px-[6px] pb-0.5 text-xs text-[#666] outline-none" />
        <button className="w-[34px] text-sm leading-5 font-bold text-[#dcebff]">OK</button>
      </form>
      <footer className="h-10 border-t-[3px] border-[#365f93] bg-[#222] pt-[10px] pr-[35px] text-right text-[10px] leading-4 text-white">
        Boosté par <a href="#phpboost" className="font-bold">PHPBoost</a> | Exécuté en 0.783s - 9 Requêtes - 10.25 MB | Thème BaseV4 par{' '}
        <a href="#phpboost" className="font-bold">PHPBoost</a>
      </footer>
    </div>
  );
}
